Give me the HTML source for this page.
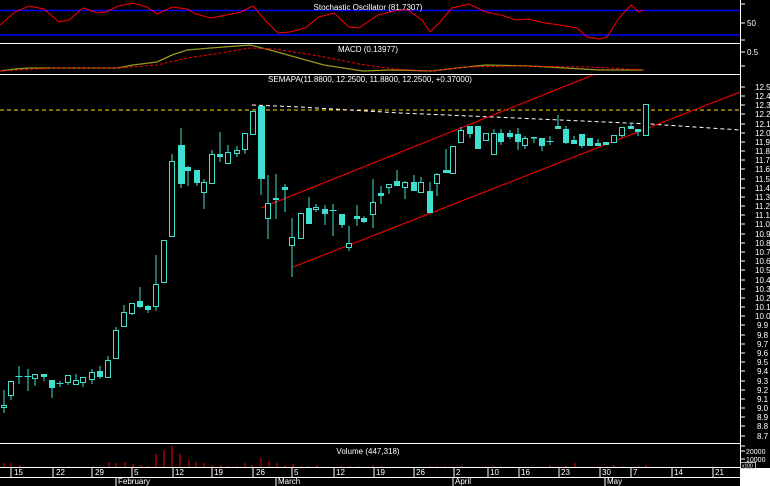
<!DOCTYPE html>
<html><head><meta charset="utf-8"><style>
html,body{margin:0;padding:0;background:#000;width:770px;height:486px;overflow:hidden}
svg{display:block}
text{font-family:"Liberation Sans",sans-serif;font-size:8px;fill:#fff}
</style></head><body>
<svg width="770" height="486" viewBox="0 0 770 486" xmlns="http://www.w3.org/2000/svg">
<rect width="770" height="486" fill="#000"/>
<!-- separators -->
<g stroke="#fff" stroke-width="1" shape-rendering="crispEdges">
<line x1="0" y1="43.5" x2="740" y2="43.5"/>
<line x1="0" y1="74.5" x2="740" y2="74.5"/>
<line x1="0" y1="443.5" x2="740" y2="443.5"/>
<line x1="0" y1="467.5" x2="740" y2="467.5"/>
<line x1="0" y1="477.5" x2="740" y2="477.5"/>
<line x1="740.5" y1="0" x2="740.5" y2="468"/>
</g>
<rect x="740" y="468" width="30" height="18" fill="#fff"/>

<!-- Stochastic -->
<g stroke="#0000ff" stroke-width="1.5"><line x1="0" y1="10.5" x2="740" y2="10.5"/><line x1="0" y1="35" x2="740" y2="35"/></g>
<polyline fill="none" stroke="#ff0000" stroke-width="1" points="0,25 15,12 29,6 44,9 59,22 69,20 83,8 98,13 106,12 118,6 133,3 147,7 157,14 172,7 187,9 196,14 211,18 226,15 241,12 253,6 265,20 278,33 290,32 305,28 319,17 334,13 349,27 359,28 378,15 398,10 408,10 422,20 430,32 440,22 452,8 469,4 486,12 501,15 516,20 528,19 545,23 560,25 577,28 587,37 599,39 607,37 619,18 631,5 639,12 643,10"/>
<text x="368" y="10" text-anchor="middle">Stochastic Oscillator (81.7307)</text>

<!-- MACD -->
<polyline fill="none" stroke="#9a9a1a" stroke-width="1.3" points="0,71 15,69 29,68 54,68 118,68 133,65 157,62 172,55 187,50 211,48 250,45 270,50 295,57 324,65 363,71 393,70 432,71 457,68 486,65 530,66 565,68 599,70 643,70"/>
<polyline fill="none" stroke="#ff0000" stroke-width="1" stroke-dasharray="3,2" points="0,71 54,68 118,68 157,65 187,58 221,53 250,48 275,49 319,56 359,64 393,69 432,71 467,67 516,66 589,67 646,70"/>
<text x="368" y="52" text-anchor="middle">MACD (0.13977)</text>

<!-- main -->
<text x="370" y="82" text-anchor="middle">SEMAPA(11.8800, 12.2500, 11.8800, 12.2500, +0.37000)</text>
<line x1="0" y1="110" x2="740" y2="110" stroke="#ffd700" stroke-width="1" stroke-dasharray="4,3"/>
<polyline fill="none" stroke="#fff" stroke-width="1" stroke-dasharray="4,3" points="252,105 300,107 400,113 470,116 560,120 650,124 740,130"/>
<line x1="261" y1="208" x2="593" y2="75" stroke="#ff0000" stroke-width="1"/>
<line x1="293" y1="267" x2="740" y2="92" stroke="#ff0000" stroke-width="1"/>

<g stroke="#40e0d0" stroke-width="1" fill="none">
<path d="M4,390V413M11,381V400M19,366V384M28,369V391M35,374V386M44,374V381M52,380V398M60,381V387M68,375V385M76,374V384M83,377V387M92,369V384M100,366V379M108,356V377M116,327V358M124,305V327M132,303V315M140,287V308M148,305V313M156,255V311M164,240V282M172,154V236M181,128V188M188,166V186M197,170V186M204,179V209M212,150V183M220,132V162M228,145V164M237,146V157M245,133V154M253,111V134M261,106V195M268,175V239M276,174V219M285,184V212M292,218V277M301,213V238M309,197V224M316,204V212M325,205V225M333,204V236M342,214V228M349,226V251M357,205V226M364,216V223M373,179V228M381,186V204M389,184V194M397,170V186M405,181V199M414,175V191M421,177V192M430,182V213M437,173V196M446,149V173M453,146V173M461,127V142M470,126V138M478,126V149M486,133V140M494,129V154M501,129V145M510,130V139M518,128V150M525,136V149M534,137V143M542,138V151M550,136V145M558,115V129M566,126V144M574,136V144M582,134V148M590,138V146M598,139V146M606,142V145M614,135V143M622,127V137M631,123V129M638,129V136M646,104V135"/>
<path d="M15.5,376.5H22.5M24.5,376.5H31.5M56.5,383.5H63.5M329.5,210.5H336.5M546.5,141.5H553.5"/>
</g>
<g fill="#40e0d0">
<rect x="41" y="374" width="6" height="3"/><rect x="49" y="380" width="6" height="8"/><rect x="97" y="371" width="6" height="6"/><rect x="137" y="301" width="6" height="6"/><rect x="145" y="306" width="6" height="4"/><rect x="178" y="145" width="7" height="39"/><rect x="185" y="167" width="6" height="4"/><rect x="194" y="170" width="6" height="13"/><rect x="217" y="154" width="6" height="3"/><rect x="258" y="106" width="7" height="73"/><rect x="273" y="198" width="6" height="2"/><rect x="282" y="187" width="6" height="3"/><rect x="306" y="208" width="6" height="16"/><rect x="322" y="209" width="6" height="5"/><rect x="339" y="214" width="6" height="11"/><rect x="354" y="216" width="6" height="3"/><rect x="361" y="218" width="6" height="4"/><rect x="378" y="193" width="6" height="3"/><rect x="394" y="181" width="6" height="5"/><rect x="411" y="182" width="6" height="9"/><rect x="427" y="191" width="6" height="22"/><rect x="443" y="170" width="7" height="3"/><rect x="467" y="126" width="6" height="8"/><rect x="475" y="126" width="6" height="23"/><rect x="498" y="133" width="6" height="9"/><rect x="507" y="133" width="6" height="4"/><rect x="515" y="134" width="6" height="8"/><rect x="531" y="137" width="6" height="1.5"/><rect x="539" y="138" width="6" height="8"/><rect x="555" y="126" width="6" height="3"/><rect x="563" y="129" width="6" height="14"/><rect x="571" y="140" width="6" height="4"/><rect x="579" y="134" width="6" height="12"/><rect x="587" y="138" width="6" height="8"/><rect x="595" y="143" width="6" height="3"/><rect x="603" y="142" width="6" height="3"/><rect x="628" y="126" width="6" height="3"/><rect x="635" y="129" width="6" height="3"/>
</g>
<g fill="#000" stroke="#40e0d0" stroke-width="1">
<rect x="1.5" y="405.5" width="5" height="2"/><rect x="8.5" y="381.5" width="5" height="14"/><rect x="32.5" y="374.5" width="5" height="4"/><rect x="65.5" y="375.5" width="5" height="7"/><rect x="73.5" y="380.5" width="5" height="4"/><rect x="80.5" y="377.5" width="5" height="5"/><rect x="89.5" y="372.5" width="5" height="7"/><rect x="105.5" y="360.5" width="5" height="17"/><rect x="113.5" y="330.5" width="5" height="28"/><rect x="121.5" y="312.5" width="5" height="14"/><rect x="129.5" y="303.5" width="5" height="10"/><rect x="153.5" y="284.5" width="5" height="22"/><rect x="161.5" y="240.5" width="5" height="42"/><rect x="169.5" y="161.5" width="5" height="75"/><rect x="201.5" y="182.5" width="5" height="10"/><rect x="209.5" y="154.5" width="5" height="29"/><rect x="225.5" y="152.5" width="5" height="11"/><rect x="234.5" y="150.5" width="5" height="3"/><rect x="242.5" y="133.5" width="5" height="16"/><rect x="250.5" y="111.5" width="5" height="23"/><rect x="265.5" y="203.5" width="5" height="15"/><rect x="289.5" y="237.5" width="5" height="8"/><rect x="298.5" y="213.5" width="5" height="25"/><rect x="313.5" y="207.5" width="5" height="2"/><rect x="346.5" y="243.5" width="5" height="4"/><rect x="370.5" y="202.5" width="5" height="12"/><rect x="386.5" y="184.5" width="5" height="3"/><rect x="402.5" y="182.5" width="5" height="5"/><rect x="418.5" y="182.5" width="5" height="10"/><rect x="434.5" y="174.5" width="5" height="9"/><rect x="450.5" y="146.5" width="5" height="27"/><rect x="458.5" y="130.5" width="5" height="12"/><rect x="483.5" y="133.5" width="5" height="7"/><rect x="491.5" y="133.5" width="5" height="21"/><rect x="522.5" y="138.5" width="5" height="7"/><rect x="611.5" y="135.5" width="5" height="7"/><rect x="619.5" y="127.5" width="5" height="8"/><rect x="643.5" y="104.5" width="5" height="31"/>
</g>

<!-- Volume -->
<text x="368" y="454" text-anchor="middle">Volume (447,318)</text>
<g stroke="#ff0000" stroke-width="1">
<path d="M4,463V467M11,463V467M20,465V467M28,467V467M44,467V467M59,467V467M69,466V467M83,467V467M93,466V467M101,467V467M109,462V467M116,463V467M125,462V467M133,464V467M141,465V467M148,466V467M156,454V467M164,450V467M172,446V467M180,454V467M189,460V467M196,462V467M204,463V467M212,465V467M221,465V467M228,466V467M237,466V467M245,463V467M252,465V467M261,458V467M269,461V467M277,463V467M285,465V467M293,464V467M301,466V467M308,466V467M317,465V467M341,466V467M350,466V467M358,466V467M373,465V467M381,466V467M430,466V467M437,466V467M445,466V467M453,466V467M462,466V467M486,466V467M494,466V467M501,466V467M550,465V467M558,466V467M566,466V467M575,463V467M599,466V467M607,466V467M614,465V467M623,466V467M639,466V467M646,465V467"/>
</g>

<!-- right axis -->
<g stroke="#fff" stroke-width="1" shape-rendering="crispEdges">
<path d="M740,4H745M740,23H745M740,40H745M740,52H745M740,66H745M740,446H745M740,451H745M740,459H745"/>
<path d="M740,87H745M740,96H745M740,105H745M740,114H745M740,124H745M740,133H745M740,142H745M740,151H745M740,160H745M740,169H745M740,179H745M740,188H745M740,197H745M740,206H745M740,215H745M740,224H745M740,234H745M740,243H745M740,252H745M740,261H745M740,270H745M740,280H745M740,289H745M740,298H745M740,307H745M740,316H745M740,325H745M740,335H745M740,344H745M740,353H745M740,362H745M740,371H745M740,381H745M740,390H745M740,399H745M740,408H745M740,417H745M740,426H745M740,436H745"/>
</g>
<g>
<text x="747" y="26">50</text><text x="747" y="55">0.5</text>
<text x="755" y="90">12.5</text><text x="755" y="99">12.4</text><text x="755" y="108">12.3</text><text x="755" y="117">12.2</text><text x="755" y="127">12.1</text><text x="755" y="136">12.0</text><text x="755" y="145">11.9</text><text x="755" y="154">11.8</text><text x="755" y="163">11.7</text><text x="755" y="172">11.6</text><text x="755" y="182">11.5</text><text x="755" y="191">11.4</text><text x="755" y="200">11.3</text><text x="755" y="209">11.2</text><text x="755" y="218">11.1</text><text x="755" y="227">11.0</text><text x="755" y="237">10.9</text><text x="755" y="246">10.8</text><text x="755" y="255">10.7</text><text x="755" y="264">10.6</text><text x="755" y="273">10.5</text><text x="755" y="283">10.4</text><text x="755" y="292">10.3</text><text x="755" y="301">10.2</text><text x="755" y="310">10.1</text><text x="755" y="319">10.0</text><text x="757" y="328">9.9</text><text x="757" y="338">9.8</text><text x="757" y="347">9.7</text><text x="757" y="356">9.6</text><text x="757" y="365">9.5</text><text x="757" y="374">9.4</text><text x="757" y="384">9.3</text><text x="757" y="393">9.2</text><text x="757" y="402">9.1</text><text x="757" y="411">9.0</text><text x="757" y="420">8.9</text><text x="757" y="429">8.8</text><text x="757" y="439">8.7</text>
<text x="746" y="454" style="font-size:7px">20000</text><text x="746" y="462" style="font-size:7px">10000</text>
</g>
<rect x="740.5" y="462.5" width="15" height="6" fill="#000" stroke="#fff" stroke-width="0.7"/>
<text x="742" y="467.5" style="font-size:5px">x100</text>

<!-- date axis -->
<g stroke="#fff" stroke-width="1" shape-rendering="crispEdges">
<path d="M11,468V477M53,468V477M92,468V477M132,468V477M173,468V477M212,468V477M253,468V477M292,468V477M334,468V477M374,468V477M414,468V477M454,468V477M488,468V477M519,468V477M559,468V477M600,468V477M631,468V477M672,468V477M713,468V477"/>
<path d="M116,477V486M276,477V486M453,477V486M605,477V486"/>
</g>
<g>
<text x="14" y="475">15</text><text x="56" y="475">22</text><text x="95" y="475">29</text><text x="134" y="475">5</text><text x="175" y="475">12</text><text x="214" y="475">19</text><text x="256" y="475">26</text><text x="294" y="475">5</text><text x="336" y="475">12</text><text x="376" y="475">19</text><text x="416" y="475">26</text><text x="456" y="475">2</text><text x="490" y="475">10</text><text x="521" y="475">16</text><text x="561" y="475">23</text><text x="602" y="475">30</text><text x="633" y="475">7</text><text x="674" y="475">14</text><text x="715" y="475">21</text>
<text x="118" y="484">February</text><text x="278" y="484">March</text><text x="455" y="484">April</text><text x="607" y="484">May</text>
</g>
</svg>
</body></html>
